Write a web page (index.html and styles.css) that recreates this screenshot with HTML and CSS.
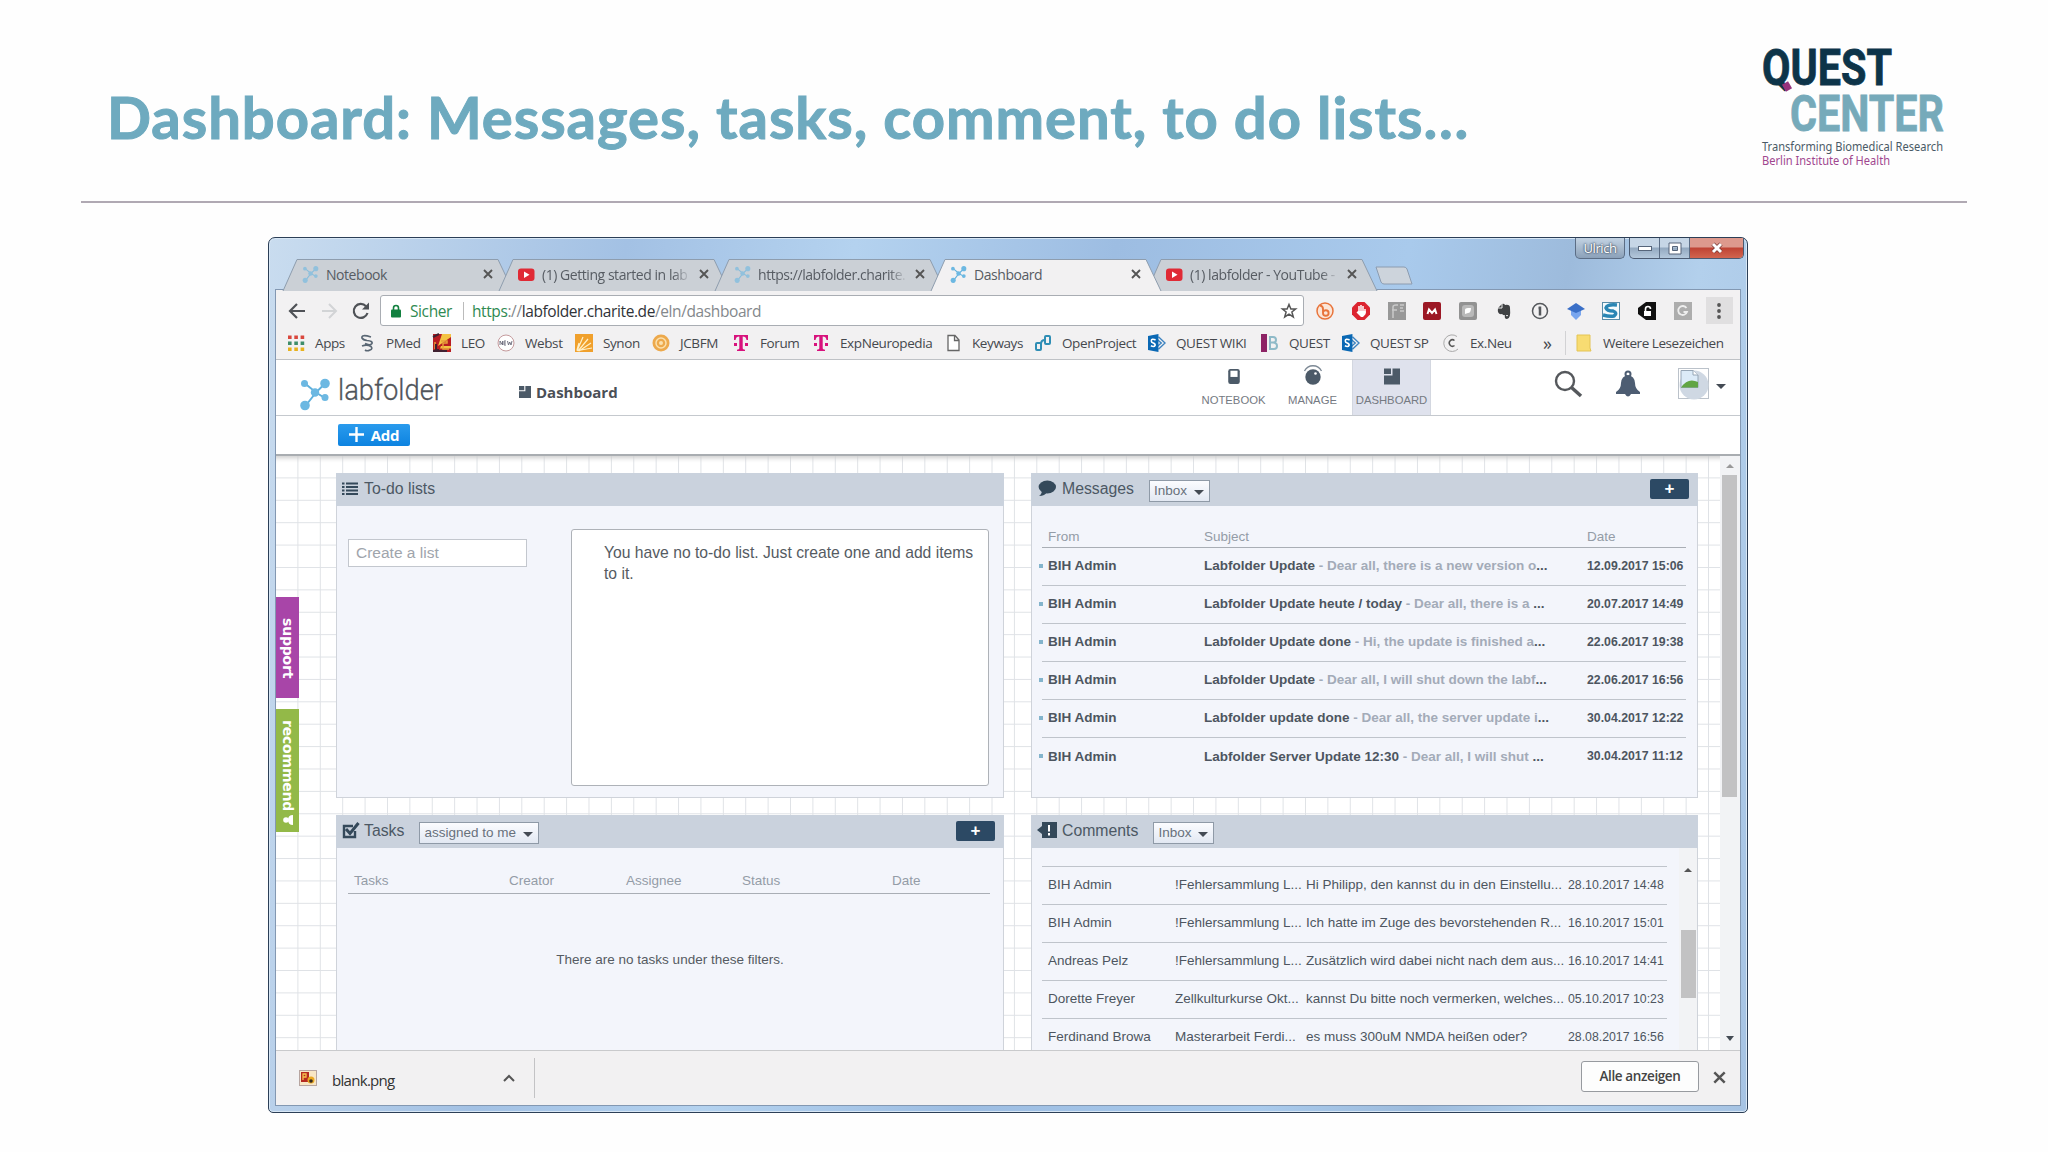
FILE: index.html
```html
<!DOCTYPE html>
<html lang="en">
<head>
	<meta charset="utf-8">
	<title>Dashboard</title>
	<link rel="stylesheet" href="styles.css">
</head>
<body>

<svg class="sprites">
	<symbol id="molecule" viewBox="0 0 30 32">
		<path d="M5 5L16 14L25 5M16 14L5 28M16 14L24 19" fill="none" stroke="#5fb0dc" stroke-width="2"/>
		<circle cx="4.500" cy="5" r="3.500" fill="#6cb8e2"/><circle cx="25" cy="5" r="4.800" fill="#6cb8e2"/>
		<circle cx="15" cy="14" r="4.200" fill="#6cb8e2"/><circle cx="25" cy="19" r="3.500" fill="#6cb8e2"/>
		<circle cx="5" cy="27" r="4.800" fill="#6cb8e2"/>
	</symbol>
	<symbol id="youtube" viewBox="0 0 17 17">
		<rect x="0" y="2.500" width="16.500" height="12.500" rx="3" fill="#e02a35"/><path d="M6 5.500L11.500 8.700L6 12Z" fill="#fff"/>
	</symbol>
	<symbol id="cross" viewBox="0 0 10 10"><path d="M1 1L9 9M9 1L1 9" stroke="#555" stroke-width="1.900"/></symbol>
	<symbol id="telekom" viewBox="0 0 18 18">
		<path d="M2 1H16V6H14.500Q14 2.600 10.700 2.600V14.500Q10.700 15.600 13 15.700V17H5V15.700Q7.300 15.600 7.300 14.500V2.600Q4 2.600 3.500 6H2ZM2 9H5V12H2ZM13 9H16V12H13Z" fill="#d8127d"/>
	</symbol>
	<symbol id="sharepoint" viewBox="0 0 19 19">
		<path d="M11 3L18 9.500L11 16M10 6L14 9.500L10 13" fill="none" stroke="#3d83c0" stroke-width="1.500"/>
		<path d="M0 2L11 0V19L0 17Z" fill="#0a68b4"/>
		<path d="M8 6.200Q3.500 4.500 3.500 7.300Q3.500 8.800 5.500 9.500Q7.800 10.300 7.500 12Q6.500 14 3 12.500" fill="none" stroke="#fff" stroke-width="1.700"/>
	</symbol>
	<symbol id="tiles" viewBox="0 0 16 16"><path d="M0 0H7V5.500H0ZM8.500 0H16V16H0V7H8.500Z" fill="#4c5a68"/></symbol>
</svg>

<header class="slide-header">
	<h1>Dashboard: Messages, tasks, comment, to do lists…</h1>
	<svg class="quest-logo" width="190" height="130" viewBox="0 0 190 130">
		<text class="quest" x="2" y="45" textLength="130" lengthAdjust="spacingAndGlyphs">QUEST</text>
		<path d="M25 43L29 50" stroke="#96337c" stroke-width="7"/>
		<text class="center" x="30" y="91" textLength="154" lengthAdjust="spacingAndGlyphs">CENTER</text>
		<text class="tag" x="2" y="110.500" textLength="181" lengthAdjust="spacingAndGlyphs">Transforming Biomedical Research</text>
		<text class="tag berlin" x="2" y="125" textLength="128" lengthAdjust="spacingAndGlyphs">Berlin Institute of Health</text>
	</svg>
</header>

<div class="window">
	<div class="titlebar">
		<div class="tabs">
			<div class="tab">
				<svg class="shape" viewBox="0 0 230 32"><path d="M0 32L14 .500H215L230 32"/></svg>
				<svg class="fav dim"><use href="#molecule"/></svg><span>Notebook</span><svg class="x"><use href="#cross"/></svg>
			</div>
			<div class="tab">
				<svg class="shape" viewBox="0 0 230 32"><path d="M0 32L14 .500H215L230 32"/></svg>
				<svg class="fav"><use href="#youtube"/></svg><span class="fade">(1) Getting started in lab</span><svg class="x"><use href="#cross"/></svg>
			</div>
			<div class="tab">
				<svg class="shape" viewBox="0 0 230 32"><path d="M0 32L14 .500H215L230 32"/></svg>
				<svg class="fav dim"><use href="#molecule"/></svg><span class="fade">https://labfolder.charite.</span><svg class="x"><use href="#cross"/></svg>
			</div>
			<div class="tab active">
				<svg class="shape" viewBox="0 0 230 32"><path d="M0 32L14 .500H215L230 32"/></svg>
				<svg class="fav"><use href="#molecule"/></svg><span>Dashboard</span><svg class="x"><use href="#cross"/></svg>
			</div>
			<div class="tab">
				<svg class="shape" viewBox="0 0 230 32"><path d="M0 32L14 .500H215L230 32"/></svg>
				<svg class="fav"><use href="#youtube"/></svg><span class="fade">(1) labfolder - YouTube -</span><svg class="x"><use href="#cross"/></svg>
			</div>
			<svg class="newtab" width="38" height="19" viewBox="0 0 38 19"><path d="M1 1H29Q31 1 32 3L37 18H9Q7 18 6 16Z" fill="#cdd4dc" stroke="#8c9cb0"/></svg>
		</div>
		<div class="user">Ulrich</div>
		<div class="controls">
			<span><svg width="14" height="8"><rect x=".500" y="2.500" width="13" height="4" fill="#fff" stroke="#56657a"/></svg></span>
			<span><svg width="14" height="13"><path d="M1 1H13V12H1ZM4.500 4.500V8.500H9.500V4.500Z" fill="#fff" fill-rule="evenodd" stroke="#56657a"/></svg></span>
			<span class="close"><svg width="14" height="12" viewBox="0 0 14 12"><path d="M3 2L11 10M11 2L3 10" stroke="#7a3a36" stroke-width="4.500"/><path d="M3 2L11 10M11 2L3 10" stroke="#fff" stroke-width="3"/></svg></span>
		</div>
	</div>

	<div class="client">
		<div class="toolbar">
			<svg class="nav-btn" viewBox="0 0 18 18"><path d="M17 9H2M9 2L2 9L9 16" fill="none" stroke="#4f5257" stroke-width="2.200"/></svg>
			<svg class="nav-btn" viewBox="0 0 18 18"><path d="M2 9H16M9 2L16 9L9 16" fill="none" stroke="#d2d4d6" stroke-width="2"/></svg>
			<svg class="nav-btn" viewBox="0 0 18 18"><path d="M15.500 11A7 7 0 1 1 14 4.200" fill="none" stroke="#4f5257" stroke-width="2.200"/><path d="M17 .500V7.500H10Z" fill="#4f5257"/></svg>
			<div class="omnibox">
				<svg width="10" height="14" viewBox="0 0 10 14"><path d="M2.500 6V4A2.500 2.500 0 0 1 7.500 4V6" fill="none" stroke="#12803f" stroke-width="1.600"/><rect y="5.500" width="10" height="8" rx="1" fill="#12803f"/></svg>
				<span class="secure">Sicher</span>
				<span class="url"><i>https</i>://<b>labfolder.charite.de</b>/eln/dashboard</span>
				<svg class="star" width="16" height="16" viewBox="0 0 16 16"><path d="M8 1.500L9.900 6H14.600L10.900 9L12.300 14L8 11.200L3.700 14L5.100 9L1.400 6H6.100Z" fill="none" stroke="#555" stroke-width="1.500"/></svg>
			</div>
			<div class="extensions">
				<svg viewBox="0 0 18 18"><circle cx="9" cy="9" r="8" fill="#fbe6d8" stroke="#e8743b" stroke-width="1.500"/><path d="M4 3.500Q7 4 7 7V11A2.800 2.800 0 1 0 9.800 8.200Q8 8.200 7 10" fill="none" stroke="#e8743b" stroke-width="1.900"/></svg>
				<svg viewBox="0 0 18 18"><path d="M5.500 0H12.500L18 5.500V12.500L12.500 18H5.500L0 12.500V5.500Z" fill="#dc2430"/><path d="M7 10V4M9 9V3M11 10V4M13 11V7" fill="none" stroke="#fff" stroke-width="1.500"/><path d="M6 9H13.700V12L11 15H9L4.500 10.500Z" fill="#fff"/></svg>
				<svg viewBox="0 0 18 18"><rect width="18" height="18" fill="#989898"/><path d="M5 16V5Q5 3 8 3H10M4 8H9M12 3H16M12 6H15M12 9H16" fill="none" stroke="#c9c9c9" stroke-width="1.500"/></svg>
				<svg viewBox="0 0 18 18"><rect width="18" height="18" rx="2" fill="#9c1825"/><path d="M4.500 12L6 7.500L9 11L12 7.500L13.500 12" fill="none" stroke="#fff" stroke-width="2"/></svg>
				<svg viewBox="0 0 18 18"><rect width="18" height="18" rx="2" fill="#929292"/><rect x="3" y="3" width="12" height="12" rx="3" fill="#b9b9b9"/><path d="M6 12V8Q6 6 9 6H12Q12 11 9 11Z" fill="#fff"/></svg>
				<svg viewBox="0 0 18 18"><path d="M3 6L7 2Q9 1 10 3Q15 2 15 6Q16 17 12 17Q9 17 10 13Q9 14 7 12Q2 13 3 6Z" fill="#3f4143"/><path d="M3 6H7V2M11 14Q12 12.500 13 14" fill="none" stroke="#eee" stroke-width="1"/></svg>
				<svg viewBox="0 0 18 18"><circle cx="9" cy="9" r="7.500" fill="none" stroke="#55585c" stroke-width="1.500"/><path d="M9 4.500V13.500M7.500 6H9" stroke="#55585c" stroke-width="2.500"/></svg>
				<svg viewBox="0 0 18 18"><path d="M4 6H14V13L9 18L4 13Z" fill="#79a6ef"/><path d="M9 1L18 7L9 11L0 7Z" fill="#3a6fc7"/></svg>
				<svg viewBox="0 0 18 18"><rect x=".500" y=".500" width="17" height="17" fill="#f4fafc" stroke="#588ca8"/><path d="M15 3Q5 2 4 6Q5 9 11 9Q16 11 12 14Q8 15 1 13" fill="none" stroke="#2a86b4" stroke-width="3.500"/></svg>
				<svg viewBox="0 0 18 18"><path d="M8 0H18V18H8L0 12V6Z" fill="#111"/><path d="M6 9H13V14H6Z" fill="#fff"/><path d="M7.500 9V7A2.500 2.500 0 0 1 12.500 7" fill="none" stroke="#fff" stroke-width="1.600"/></svg>
				<svg viewBox="0 0 18 18"><rect width="18" height="18" fill="#adadad"/><path d="M12.500 6A4.500 4.500 0 1 0 13 10H9.500" fill="none" stroke="#eee" stroke-width="1.800"/></svg>
			</div>
			<div class="more"><svg width="4" height="16" viewBox="0 0 4 16"><g fill="#555"><circle cx="2" cy="2" r="1.900"/><circle cx="2" cy="8" r="1.900"/><circle cx="2" cy="14" r="1.900"/></g></svg></div>
		</div>

		<div class="bookmarks">
			<div><svg viewBox="0 0 18 18"><g stroke-width="3.600" stroke-dasharray="3.600 2.700"><path d="M1 3.300H17.500" stroke="#d9473d"/><path d="M1 9.300H17.500" stroke="#3f8d6a"/><path d="M1 15.300H17.500" stroke="#e8b21d"/></g></svg>Apps</div>
			<div><svg viewBox="0 0 18 18"><path d="M13 3Q3 0 4 4Q5 6 9 6.500Q15 7 14 9.500Q12 12 7 9.500M4 12Q9 10 13 12.500Q15 15 12 16Q9 17.500 7 16" fill="none" stroke="#5a6774" stroke-width="1.700"/></svg>PMed</div>
			<div><svg viewBox="0 0 18 18"><rect width="18" height="18" fill="#b81c22"/><path d="M0 0H18V3L5 12L9 0ZM8 12H18V14.500H7Z" fill="#f4c343"/><path d="M8 7H14V9H10V15H16M2 15V8" stroke="#e8a03a" stroke-width="1.500" fill="none"/><path d="M0 3L6 0M0 17H14M3 10V16H6" stroke="#402030" stroke-width="2" fill="none"/></svg>LEO</div>
			<div><svg viewBox="0 0 18 18"><circle cx="9" cy="9" r="8" fill="#fff" stroke="#c59a9c"/><path d="M3 11V7L5.500 11V7M9 7H7V11H9M7 9H9M10.500 7L11.500 11L12.700 8L14 11L15 7" fill="none" stroke="#667" stroke-width=".900"/></svg>Webst</div>
			<div><svg viewBox="0 0 18 18"><rect width="18" height="18" fill="#f0a02c"/><path d="M2 17L8 3M3 17L13 5M4 17L16 9M2 16L4 9M6 16L17 14" stroke="#fff0c8" stroke-width="1.200"/></svg>Synon</div>
			<div><svg viewBox="0 0 18 18"><circle cx="9" cy="9" r="8.500" fill="#eda94c"/><circle cx="9" cy="9" r="5" fill="none" stroke="#fbe1ae" stroke-width="1.500"/><circle cx="9" cy="9" r="2" fill="#fbe1ae"/></svg>JCBFM</div>
			<div><svg><use href="#telekom"/></svg>Forum</div>
			<div><svg><use href="#telekom"/></svg>ExpNeuropedia</div>
			<div><svg viewBox="0 0 18 18"><path d="M4 1.500H11L15 6V16.500H4ZM10.500 1.500V6.500H15" fill="#fff" stroke="#666" stroke-width="1.300"/></svg>Keyways</div>
			<div><svg viewBox="0 0 18 18"><g fill="none" stroke="#2f8eb5" stroke-width="2"><rect x="11" y="2" width="5" height="8" rx="1"/><rect x="2" y="9" width="5" height="7" rx="1"/><path d="M7 10Q7 6 11 6"/></g></svg>OpenProject</div>
			<div><svg><use href="#sharepoint"/></svg>QUEST WIKI</div>
			<div><svg viewBox="0 0 18 18"><rect width="6" height="18" fill="#8d2365"/><path d="M9 2V16M9 3H12Q15 3 15 6Q15 8.500 12 8.500H9M12 8.500Q16 8.500 16 12Q16 15 13 15H9" fill="none" stroke="#8fbac8" stroke-width="2"/></svg>QUEST</div>
			<div><svg><use href="#sharepoint"/></svg>QUEST SP</div>
			<div><svg viewBox="0 0 18 18"><path d="M15 2.500A8.300 8.300 0 1 0 16 15" fill="none" stroke="#aaa"/><path d="M12.500 6.500A3.200 3.200 0 1 0 12.500 11.500" fill="none" stroke="#555" stroke-width="1.500"/></svg>Ex.Neu</div>
			<div class="chevrons">»</div>
			<div class="others"><svg viewBox="0 0 18 18"><path d="M2 1H15V14L16 17H2Z" fill="#f8dc72" stroke="#e4c454"/></svg>Weitere Lesezeichen</div>
		</div>

		<div class="app-header">
			<svg class="lf-icon"><use href="#molecule"/></svg>
			<svg class="lf-name" width="110" height="36" viewBox="0 0 110 36"><text x="1" y="28" textLength="105" lengthAdjust="spacingAndGlyphs">labfolder</text></svg>
			<div class="crumb"><svg><use href="#tiles"/></svg>Dashboard</div>
			<nav>
				<a><svg viewBox="0 0 18 18"><path d="M5 .500H13Q15.500 .500 15.500 3V15Q15.500 17.500 13 17.500H5Q2.500 17.500 2.500 15V3Q2.500 .500 5 .500Z" fill="#4c5a68"/><path d="M5 2.500H13V9.500H5Z" fill="#fff"/></svg>NOTEBOOK</a>
				<a><svg viewBox="0 0 18 20" class="tall"><path d="M.500 6A9.500 9.500 0 0 1 17.500 6" fill="none" stroke="#7c8894" stroke-width="1.300"/><circle cx="9" cy="12" r="7.700" fill="#4c5a68"/><circle cx="11.500" cy="8.500" r="1.300" fill="#fff"/></svg>MANAGE</a>
				<a class="on"><svg><use href="#tiles"/></svg>DASHBOARD</a>
			</nav>
			<div class="tools">
				<svg width="29" height="29" viewBox="0 0 29 29"><circle cx="11" cy="11" r="9" fill="none" stroke="#55585c" stroke-width="2.400"/><path d="M17.500 17.500L27 26" stroke="#55585c" stroke-width="3.500"/></svg>
				<svg width="26" height="28" viewBox="0 0 26 28"><circle cx="13" cy="4" r="2.500" fill="none" stroke="#4d5d72" stroke-width="2"/><path d="M13 5Q19.500 6 20 13Q20 19 25 22V24H16Q13 29 10 24H1V22Q6 19 6 13Q6.500 6 13 5Z" fill="#4d5d72"/></svg>
				<svg width="32" height="32" viewBox="0 0 32 32"><rect x=".500" y=".500" width="30" height="30" fill="#fff" stroke="#bbc2ca"/><circle cx="16" cy="17" r="14.500" fill="#cfd8e3"/><path d="M3 2.500H15L20 7V19.500H3Z" fill="#dcebf8" stroke="#96a6b6"/><path d="M3 19.500Q10 9 20 14V19.500Z" fill="#61a544"/><path d="M15 2.500V7H20" fill="#fff" stroke="#96a6b6"/></svg>
				<i class="caret"></i>
			</div>
		</div>
		<div class="actions"><button class="add"><svg width="15" height="15"><path d="M7.500 0V15M0 7.500H15" stroke="#fff" stroke-width="2.400"/></svg>Add</button></div>

		<div class="content">
			<div class="side support">support</div>
			<div class="side recommend">recommend <svg width="10" height="12" viewBox="0 0 10 12"><circle cx="3" cy="6" r="2.800" fill="#fff"/><path d="M10 1Q5 1 5 6Q5 11 10 11Z" fill="#fff"/></svg></div>

			<div class="panels">
				<section class="panel todo">
					<h2><svg viewBox="0 0 18 16"><path d="M0 3H2.500M0 6.500H2.500M0 10H2.500M0 13.500H2.500M4 3H16M4 6.500H16M4 10H16M4 13.500H16" stroke="#34495a" stroke-width="2"/></svg>To-do lists</h2>
					<div class="todo-body">
						<input type="text" placeholder="Create a list">
						<div class="notes">You have no to-do list. Just create one and add items to it.</div>
					</div>
				</section>

				<section class="panel messages">
					<h2><svg class="big" viewBox="0 0 18 17"><ellipse cx="9.300" cy="7" rx="8.700" ry="6.500" fill="#34495a"/><path d="M4 10Q4 14 1 16Q7 16 9 12Z" fill="#34495a"/></svg>Messages<span class="select">Inbox<i class="caret"></i></span><button class="plus">+</button></h2>
					<div class="row head"><span>From</span><span>Subject</span><span>Date</span></div>
					<div class="row"><span>BIH Admin</span><span>Labfolder Update <em>- Dear all, there is a new version o</em>...</span><time>12.09.2017 15:06</time></div>
					<div class="row"><span>BIH Admin</span><span>Labfolder Update heute / today <em>- Dear all, there is a </em>...</span><time>20.07.2017 14:49</time></div>
					<div class="row"><span>BIH Admin</span><span>Labfolder Update done <em>- Hi, the update is finished a</em>...</span><time>22.06.2017 19:38</time></div>
					<div class="row"><span>BIH Admin</span><span>Labfolder Update <em>- Dear all, I will shut down the labf</em>...</span><time>22.06.2017 16:56</time></div>
					<div class="row"><span>BIH Admin</span><span>Labfolder update done <em>- Dear all, the server update i</em>...</span><time>30.04.2017 12:22</time></div>
					<div class="row"><span>BIH Admin</span><span>Labfolder Server Update 12:30 <em>- Dear all, I will shut </em>...</span><time>30.04.2017 11:12</time></div>
				</section>

				<section class="panel tasks">
					<h2><svg viewBox="0 0 18 17"><path d="M13 9V15H2V4H11" fill="none" stroke="#34495a" stroke-width="2.400"/><path d="M4 7L8 11.500L16.500 1" fill="none" stroke="#34495a" stroke-width="3"/></svg>Tasks<span class="select">assigned to me<i class="caret"></i></span><button class="plus">+</button></h2>
					<div class="row head"><span>Tasks</span><span>Creator</span><span>Assignee</span><span>Status</span><span>Date</span></div>
					<p>There are no tasks under these filters.</p>
				</section>

				<section class="panel comments">
					<h2><svg class="big" viewBox="0 0 20 17"><path d="M5 0H20V16H5V12L0 8L5 4Z" fill="#34495a"/><path d="M12 3V9.500M12 11V13.500" stroke="#fff" stroke-width="2"/></svg>Comments<span class="select">Inbox<i class="caret"></i></span></h2>
					<div class="scroller">
						<div class="rows">
							<div class="row"><span>BIH Admin</span><span>!Fehlersammlung L...</span><span>Hi Philipp, den kannst du in den Einstellu...</span><time>28.10.2017 14:48</time></div>
							<div class="row"><span>BIH Admin</span><span>!Fehlersammlung L...</span><span>Ich hatte im Zuge des bevorstehenden R...</span><time>16.10.2017 15:01</time></div>
							<div class="row"><span>Andreas Pelz</span><span>!Fehlersammlung L...</span><span>Zusätzlich wird dabei nicht nach dem aus...</span><time>16.10.2017 14:41</time></div>
							<div class="row"><span>Dorette Freyer</span><span>Zellkulturkurse Okt...</span><span>kannst Du bitte noch vermerken, welches...</span><time>05.10.2017 10:23</time></div>
							<div class="row"><span>Ferdinand Browa</span><span>Masterarbeit Ferdi...</span><span>es muss 300uM NMDA heißen oder?</span><time>28.08.2017 16:56</time></div>
						</div>
						<div class="bar"><i class="caret up"></i><div class="thumb"></div></div>
					</div>
				</section>
			</div>
			<div class="scrollbar"><i class="caret up"></i><div class="thumb"></div><i class="caret"></i></div>
		</div>

		<div class="downloads">
			<svg class="file" width="18" height="16" viewBox="0 0 18 16"><rect x=".500" y=".500" width="17" height="15" fill="#f8e6c4" stroke="#b7a5a0"/><rect x="2" y="2" width="8" height="10" fill="#b62a20"/><path d="M4 10V4H7V7H4" fill="none" stroke="#f7c34d" stroke-width="1.300"/><circle cx="12" cy="10" r="3.500" fill="#eaa822"/><circle cx="12" cy="11" r="1.800" fill="#342a22"/></svg>
			<span class="name">blank.png</span>
			<div class="expand"><svg width="12" height="8"><path d="M1 7L6 2L11 7" fill="none" stroke="#555" stroke-width="2"/></svg></div>
			<button class="all">Alle anzeigen</button>
			<svg class="dismiss"><use href="#cross"/></svg>
		</div>
	</div>
</div>

</body>
</html>
```
FILE: styles.css
```css
* {
	box-sizing: border-box;
}

body {
	margin: 0;
	width: 2048px;
	height: 1152px;
	overflow: hidden;
	background: #fefefe;
	font-family: "Liberation Sans", Arial, sans-serif;
	color: #4d5560;
}

svg {
	flex: none;
	overflow: visible;
}

.sprites {
	display: none;
}

/* slide title and logo */
.slide-header {
	display: flex;
	justify-content: space-between;
	height: 203px;
	margin: 0 81px 34px;
	border-bottom: 2px solid #b0a9b3;
}

h1 {
	margin: 82px 0 0 26px;
	font: bold 58px/70px Lato, sans-serif;
	letter-spacing: .95px;
	color: #6eaabf;
	-webkit-text-stroke: 1px #6eaabf;
	white-space: nowrap;
}

.quest-logo {
	margin: 40px 17px 0 0;
}

.quest-logo text {
	font: bold 50px Roboto, sans-serif;
	fill: #0d3449;
	stroke: #0d3449;
	stroke-width: .8;
}

.quest-logo .center {
	fill: #76aaba;
	stroke: #76aaba;
}

.quest-logo .tag {
	font: 12.5px "Noto Sans", sans-serif;
	fill: #4a5a66;
	stroke: none;
}

.quest-logo .berlin {
	fill: #a0468f;
}

/* browser window */
.window {
	width: 1480px;
	height: 876px;
	margin-left: 268px;
	padding: 0 7px 7px;
	border: 1px solid #2c3f57;
	border-radius: 7px 7px 5px 5px;
	background: linear-gradient(100deg, #c9dcef, #a3c1e4 22%, #b4d2ef 36%, #9dbde2 52%, #a9caec 70%, #9dbbdc 80%, #b3d0ec 88%, #a6c3e3);
	box-shadow: inset 0 0 0 1px #d8e7f5;
	font-family: "Open Sans", "Noto Sans", sans-serif;
}

.titlebar {
	display: flex;
	height: 52px;
	margin-right: -4px;
}

.tabs {
	display: flex;
	flex: none;
	align-items: flex-end;
	width: 1299px;
	padding-left: 7px;
}

.tab {
	position: relative;
	display: flex;
	align-items: center;
	width: 230px;
	height: 31px;
	margin-right: -14px;
	padding: 0 20px 1px 19px;
	font-size: 14px;
	letter-spacing: -.45px;
	color: #575c63;
}

.tab .shape {
	position: absolute;
	left: 0;
	top: 0;
	width: 230px;
	height: 32px;
	fill: #cbd0d6;
	stroke: #8e9dae;
}

.tab.active {
	z-index: 1;
}

.tab.active .shape {
	fill: #f2f1f2;
}

.tab .fav {
	position: relative;
	width: 17px;
	height: 17px;
	margin-right: 7px;
}

.tab .dim {
	opacity: .6;
}

.tab span {
	position: relative;
	flex: 1;
	overflow: hidden;
	white-space: nowrap;
}

.tab .fade {
	-webkit-mask-image: linear-gradient(90deg, #000 88%, transparent 100%);
	mask-image: linear-gradient(90deg, #000 88%, transparent 100%);
}

.tab .x {
	position: relative;
	width: 10px;
	height: 10px;
	margin-left: 8px;
}

.newtab {
	margin: 0 0 5px 12px;
}

.user {
	width: 50px;
	height: 21px;
	border: 1px solid #5b6d85;
	border-top: 0;
	border-radius: 0 0 5px 5px;
	background: linear-gradient(#c3d3e3, #8ba1b9);
	text-align: center;
	font-size: 13px;
	line-height: 20px;
	letter-spacing: -.4px;
	color: #fff;
	text-shadow: 0 0 2px #38475a, 0 0 2px #38475a;
}

.controls {
	display: flex;
	width: 115px;
	height: 21px;
	margin-left: 4px;
	border: 1px solid #4b5b72;
	border-top: 0;
	border-radius: 0 0 5px 5px;
	overflow: hidden;
	background: linear-gradient(#c6d6e6 45%, #93a9c0 50%, #b4c8dc);
}

.controls span {
	display: flex;
	align-items: center;
	justify-content: center;
	width: 30px;
	border-right: 1px solid #5b6d85;
}

.controls .close {
	flex: 1;
	border: 0;
	background: linear-gradient(#dd998d 45%, #bf4334 50%, #d2654f);
}

.client {
	width: 1464px;
	height: 815px;
	outline: 1px solid #8398b2;
	background: #fff;
}

.toolbar {
	display: flex;
	align-items: center;
	height: 42px;
	padding: 0 0 1px 12px;
	background: #f2f1f2;
}

.nav-btn {
	width: 18px;
	height: 18px;
	margin-right: 14px;
}

.omnibox {
	display: flex;
	align-items: center;
	width: 924px;
	height: 31px;
	margin-left: -4px;
	padding: 0 7px 0 10px;
	border: 1px solid #a9adb3;
	border-radius: 3px;
	background: #fff;
	font-size: 15.5px;
	letter-spacing: -.4px;
	color: #84888c;
}

.secure {
	margin: 0 8px 0 9px;
	padding-right: 11px;
	border-right: 1px solid #bbb;
	line-height: 18px;
	color: #2f8a52;
}

.url {
	flex: 1;
}

.url i {
	font-style: normal;
	color: #2f8a52;
}

.url b {
	font-weight: normal;
	color: #303338;
}

.star {
	margin-right: -1px;
}

.extensions {
	display: flex;
	gap: 17.800px;
	margin: 0 14px 0 12px;
}

.extensions svg {
	width: 18px;
	height: 18px;
}

.more {
	display: flex;
	align-items: center;
	justify-content: center;
	width: 27px;
	height: 27px;
	background: #e0dfe0;
}

.bookmarks {
	display: grid;
	grid-template-columns: 71px 75px 64px 78px 77px 80px 80px 132px 90px 114px 113px 81px 100px 101px 22px 1fr;
	align-items: center;
	height: 28px;
	padding-left: 11px;
	border-bottom: 1px solid #bfc2c6;
	background: #f2f1f2;
	font-size: 13.5px;
	letter-spacing: -.4px;
	white-space: nowrap;
	color: #45484d;
}

.bookmarks div {
	display: flex;
	align-items: center;
	height: 24px;
	margin-top: -6px;
}

.bookmarks svg {
	width: 18px;
	height: 18px;
	margin-right: 10px;
}

.bookmarks .chevrons {
	font-size: 18px;
}

.bookmarks .others {
	padding-left: 9px;
	border-left: 1px solid #d2d2d4;
	letter-spacing: -.45px;
}

/* labfolder header */
.app-header {
	display: flex;
	height: 56px;
	border-bottom: 1px solid #c5c9ce;
}

.lf-icon {
	width: 30px;
	height: 33px;
	margin: 18px 7px 0 24px;
}

.lf-name {
	margin-top: 12px;
}

.lf-name text {
	font: 29px "Roboto", sans-serif;
	font-weight: 300;
	fill: #50555b;
	stroke: #50555b;
	stroke-width: .3;
}

.crumb {
	display: flex;
	flex: none;
	align-items: center;
	width: 675px;
	margin-left: 72px;
	padding-top: 9px;
	font-size: 15px;
	font-weight: bold;
	color: #4b4f56;
}

.crumb svg {
	width: 12px;
	height: 12px;
	margin-right: 5px;
}

nav {
	display: flex;
	font: 11.3px "Liberation Sans", sans-serif;
	color: #757a82;
}

nav a {
	display: flex;
	flex-direction: column;
	align-items: center;
	justify-content: flex-end;
	width: 79px;
	padding-bottom: 9px;
}

nav svg {
	width: 16px;
	height: 17px;
	margin-bottom: 9px;
}

nav .tall {
	width: 18px;
	height: 20px;
}

nav .on {
	background: #dfe2ed;
	border: solid #d3d7e0;
	border-width: 0 1px;
}

.tools {
	display: flex;
	align-items: center;
	margin-left: 123px;
	padding-bottom: 7px;
}

.tools svg {
	margin-right: 32px;
}

.tools svg:nth-child(2) {
	margin-right: 37px;
}

.tools svg:nth-child(3) {
	margin-right: 6px;
}

.caret {
	border: 5px solid transparent;
	border-top-color: #444b54;
	border-bottom: 0;
}

.caret.up {
	border: 4px solid transparent;
	border-bottom-color: #555;
	border-top: 0;
}

.tools .caret {
	margin-top: 5px;
}

.actions {
	height: 40px;
	padding: 8px 62px;
	border-bottom: 2px solid #a9adb1;
}

button {
	padding: 0;
	font-family: inherit;
}

.add {
	display: flex;
	align-items: center;
	justify-content: center;
	gap: 7px;
	width: 72px;
	height: 22px;
	border: 0;
	border-radius: 2px;
	background: linear-gradient(#2a9bed, #0d83e0);
	font-size: 15px;
	font-weight: bold;
	line-height: 18px;
	letter-spacing: -.3px;
	color: #fff;
}

.add svg {
	margin-top: -2px;
}

/* dashboard on squared paper */
.content {
	position: relative;
	display: flex;
	justify-content: space-between;
	height: 594px;
	padding-left: 60px;
	overflow: hidden;
	background:
		linear-gradient(90deg, transparent 21.400px, #dfe2e6 0) 0 0 / 22.400px 22.400px,
		linear-gradient(transparent 21.400px, #dfe2e6 0) 0 0 / 22.400px 22.400px,
		#fff;
	box-shadow: inset 0 6px 5px -4px #ccc;
	font-family: "Liberation Sans", Arial, sans-serif;
}

.side {
	position: absolute;
	left: 0;
	display: flex;
	align-items: center;
	width: 23px;
	writing-mode: vertical-rl;
	font-family: "DejaVu Sans", sans-serif;
	font-weight: bold;
	font-size: 14px;
	line-height: 22px;
	letter-spacing: -.2px;
	color: #fff;
}

.side svg {
	margin-top: 3px;
}

.support {
	top: 141px;
	height: 101px;
	padding-top: 21px;
	background: #a845a8;
}

.recommend {
	top: 253px;
	height: 123px;
	padding-top: 11px;
	background: #93b948;
}

.panels {
	display: grid;
	grid-template-columns: 668px 667px;
	grid-template-rows: 325px 325px;
	gap: 17px 27px;
	padding-top: 17px;
}

.panel {
	border: 1px solid #cfd3da;
	background: #f3f5fb;
	font-size: 13.5px;
}

h2 {
	display: flex;
	align-items: center;
	height: 33px;
	margin: -1px -1px 0;
	padding: 0 9px 2px 6px;
	background: #cad2dd;
	font-size: 15.8px;
	font-weight: normal;
	color: #4c5864;
}

h2 svg {
	width: 18px;
	height: 17px;
	margin-right: 4px;
}

h2 .big {
	width: 20px;
	margin-right: 5px;
}

.select {
	display: flex;
	align-items: center;
	gap: 7px;
	height: 22px;
	margin: 4px 0 0 15px;
	padding: 0 5px 0 4px;
	border: 1px solid #8f9aa7;
	background: linear-gradient(#fbfcff, #e2e8f2);
	font-size: 13.5px;
	color: #68717c;
}

.select .caret {
	margin-top: 3px;
}

.plus {
	width: 39px;
	height: 20px;
	margin-left: auto;
	border: 0;
	border-radius: 2px;
	background: #2c4964;
	font-size: 17px;
	font-weight: bold;
	line-height: 18px;
	color: #fff;
}

.todo-body {
	display: flex;
	justify-content: space-between;
	align-items: flex-start;
	padding: 23px 14px 0 11px;
}

.todo-body input {
	width: 179px;
	height: 28px;
	margin-top: 10px;
	padding: 0 7px;
	border: 1px solid #c3c7ce;
	font: 15.5px "Liberation Sans", sans-serif;
}

.todo-body input::placeholder {
	color: #a0a5ac;
}

.notes {
	width: 418px;
	height: 257px;
	padding: 13px 10px 0 32px;
	border: 1px solid #aeb2b8;
	border-radius: 3px;
	background: #fff;
	font-size: 15.7px;
	line-height: 20.500px;
	color: #555b62;
}

.row {
	display: grid;
	align-items: center;
	height: 38px;
	padding: 0 0 2px 6px;
	border-bottom: 1px solid #bfc4cb;
	white-space: nowrap;
}

.row.head {
	align-items: end;
	height: 42px;
	padding-bottom: 3px;
	border-color: #a9aeb5;
	color: #949ca7;
}

.messages .row {
	grid-template-columns: 156px 383px 1fr;
	margin: 0 11px 0 10px;
	font-weight: bold;
}

.messages .row.head {
	font-weight: normal;
}

.messages .row:last-child {
	border: 0;
}

.messages .row:not(.head)::before {
	content: "";
	position: absolute;
	width: 4px;
	height: 4px;
	margin-left: -9px;
	background: #83b4cc;
}

.row em {
	font-style: normal;
	color: #a3abb8;
}

.row time {
	font-size: 12.300px;
}

.tasks .row {
	grid-template-columns: 155px 117px 116px 150px 1fr;
	height: 46px;
	margin: 0 13px 0 11px;
	padding: 0 0 5px 6px;
}

.tasks p {
	margin: 58px 0 0;
	line-height: 16px;
	text-align: center;
	color: #555b62;
}

.scroller {
	display: flex;
	height: 290px;
}

.rows {
	width: 625px;
	margin: 18px 12px 0 10px;
	border-top: 1px solid #bfc4cb;
}

.comments .row {
	grid-template-columns: 127px 131px 262px 1fr;
}

.bar, .scrollbar {
	display: flex;
	flex-direction: column;
	align-items: center;
	width: 18px;
	background: #f2f3f5;
}

.bar {
	padding-top: 20px;
}

.thumb {
	width: 15px;
	background: #c2c2c3;
}

.bar .thumb {
	height: 68px;
	margin-top: 58px;
}

.scrollbar {
	width: 20px;
	padding: 8px 1px 9px 0;
}

.scrollbar .up {
	border-bottom-color: #999;
}

.scrollbar .thumb {
	height: 322px;
	margin: 7px 0 auto;
}

.scrollbar .caret:last-child {
	border-width: 5px 4px 0;
}

/* download shelf */
.downloads {
	display: flex;
	align-items: center;
	height: 56px;
	padding: 0 14px 2px 23px;
	border-top: 1px solid #c9cacc;
	background: #f2f1f2;
}

.name {
	width: 171px;
	margin: 4px 0 0 15px;
	font-size: 15px;
	letter-spacing: -.7px;
	color: #333;
}

.expand {
	width: 32px;
	height: 40px;
	padding-top: 7px;
	border-right: 1px solid #c3c3c5;
}

.all {
	width: 118px;
	height: 31px;
	margin: 0 14px 2px auto;
	border: 1px solid #979a9f;
	border-radius: 3px;
	background: #fdfdfd;
	font-size: 13.5px;
	font-weight: 600;
	line-height: 27px;
	letter-spacing: -.4px;
	color: #444;
}

.dismiss {
	width: 13px;
	height: 13px;
	margin-bottom: 1px;
}
```
